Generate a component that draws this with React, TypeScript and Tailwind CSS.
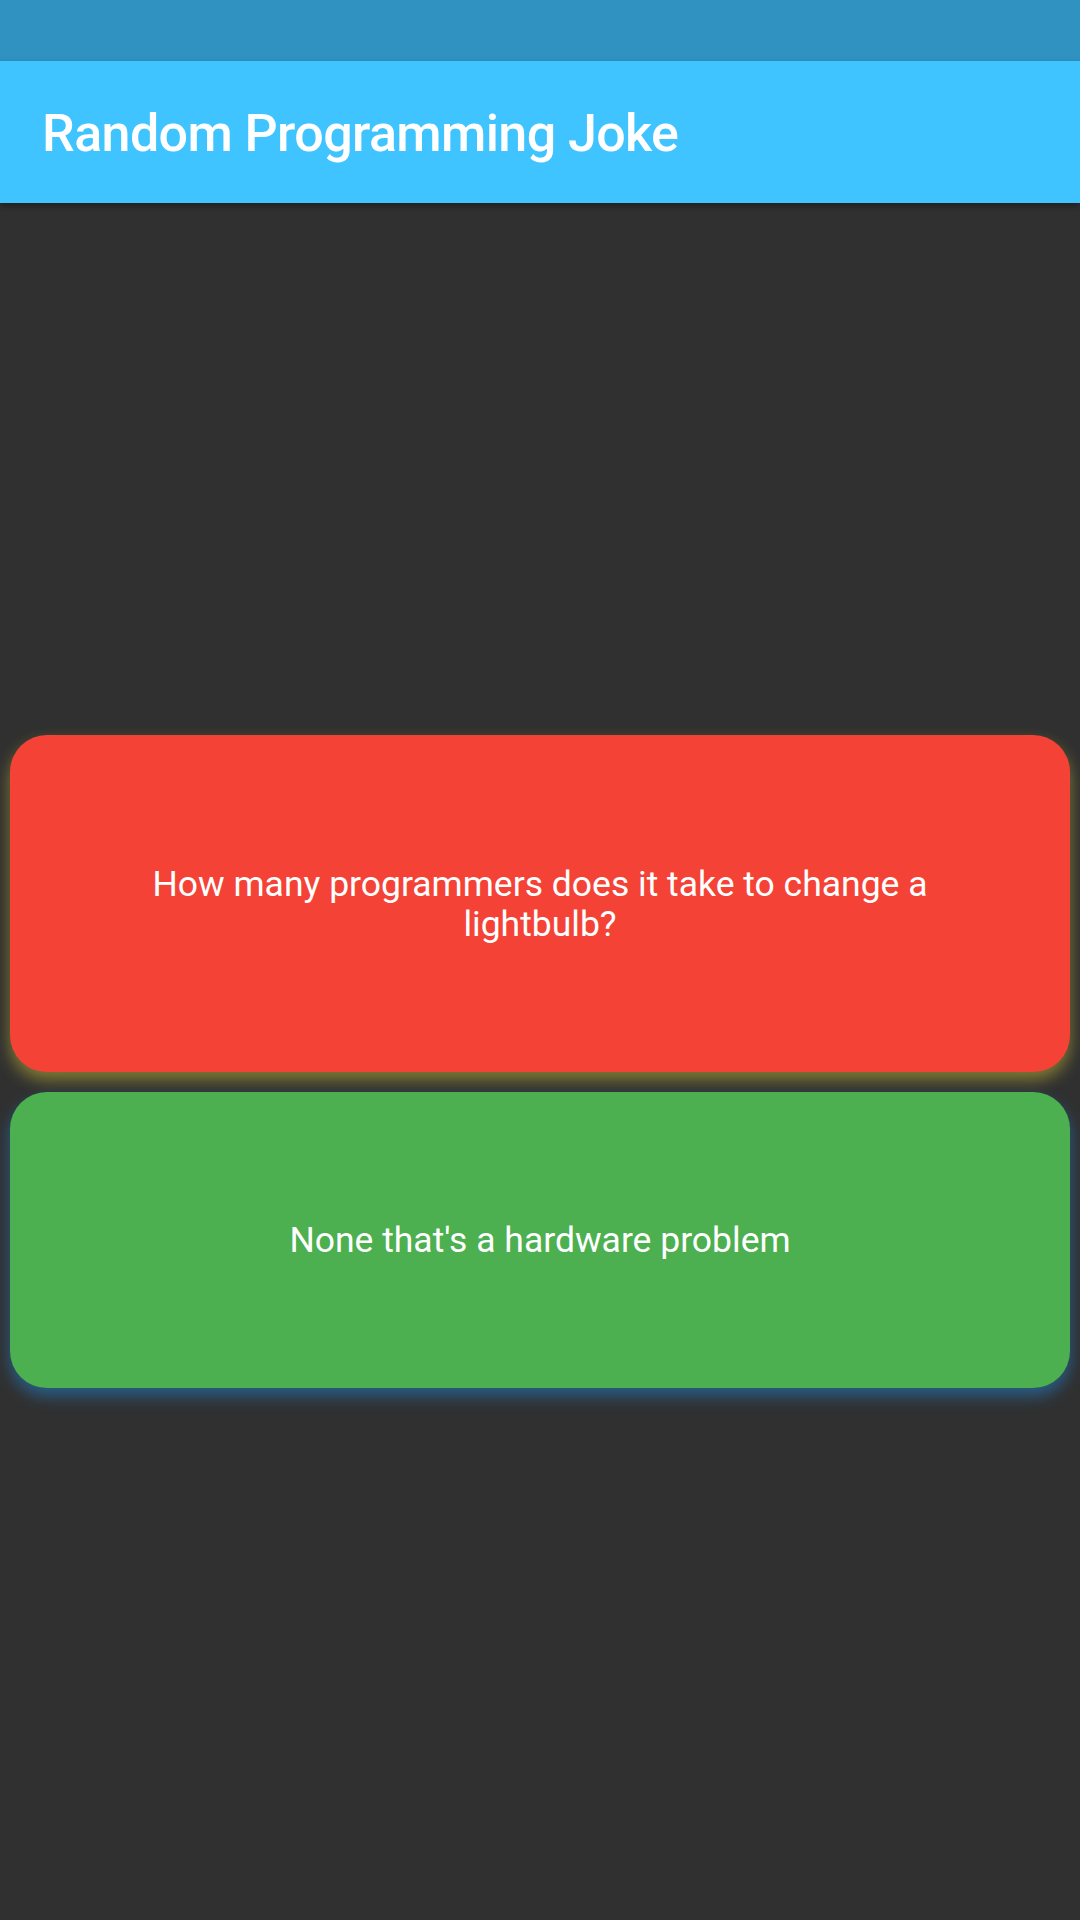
import React from "react";

export default function App() {
  return (
    <div
      className="flex h-[1920px] w-[1080px] flex-col bg-[#303030]"
      style={{ fontFamily: "Roboto, 'Noto Sans', sans-serif" }}
    >
      <div className="h-[61px] w-full shrink-0 bg-[#3092c1]" />
      <div className="relative z-10 flex h-[142px] shrink-0 items-center bg-[#40c4ff] pl-[42px] pt-[3px] shadow-[0_3px_6px_rgba(0,0,0,0.35)]">
        <span className="text-[52px] font-medium leading-none tracking-[-0.6px] text-white">
          Random Programming Joke
        </span>
      </div>
      <div className="flex flex-1 flex-col justify-center gap-[20px] px-[10px]">
        <div className="flex h-[337px] items-center justify-center rounded-[37px] bg-[#f44336] px-[105px] shadow-[0_8px_16px_rgba(255,235,59,0.4)]">
          <p className="text-center text-[35.5px] leading-[40px] text-white">
            How many programmers does it take to change a lightbulb?
          </p>
        </div>
        <div className="flex h-[296px] items-center justify-center rounded-[37px] bg-[#4caf50] px-[105px] shadow-[0_8px_16px_rgba(33,150,243,0.45)]">
          <p className="text-center text-[35.5px] leading-[40px] text-white">
            None that&apos;s a hardware problem
          </p>
        </div>
      </div>
    </div>
  );
}
